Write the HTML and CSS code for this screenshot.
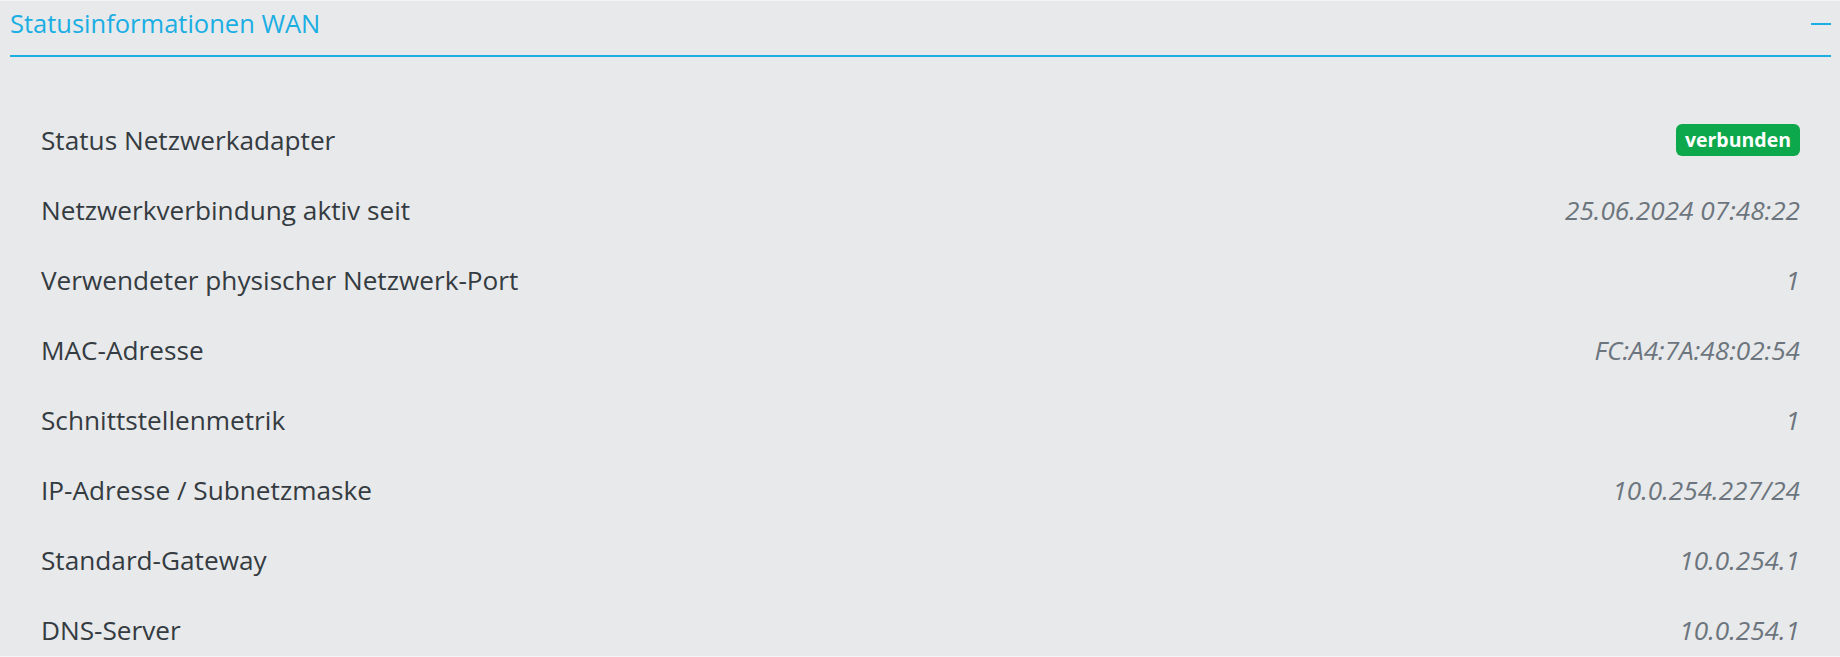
FILE: index.html
```html
<!DOCTYPE html>
<html lang="de">
<head>
  <meta charset="UTF-8" />
  <meta name="viewport" content="width=device-width, initial-scale=1.0" />
  <title>Statusinformationen WAN</title>
  <link rel="stylesheet" href="styles.css">
</head>
<body>
  <section class="panel">
    <header class="panel-head">
      <h2>Statusinformationen WAN</h2>
      <button class="collapse" title="Einklappen"><span></span></button>
    </header>

    <div class="panel-body">
      <div class="row">
        <span class="label">Status Netzwerkadapter</span>
        <span class="badge">verbunden</span>
      </div>
      <div class="row">
        <span class="label">Netzwerkverbindung aktiv seit</span>
        <span class="value">25.06.2024 07:48:22</span>
      </div>
      <div class="row">
        <span class="label">Verwendeter physischer Netzwerk-Port</span>
        <span class="value">1</span>
      </div>
      <div class="row">
        <span class="label">MAC-Adresse</span>
        <span class="value">FC:A4:7A:48:02:54</span>
      </div>
      <div class="row">
        <span class="label">Schnittstellenmetrik</span>
        <span class="value">1</span>
      </div>
      <div class="row">
        <span class="label">IP-Adresse / Subnetzmaske</span>
        <span class="value">10.0.254.227/24</span>
      </div>
      <div class="row">
        <span class="label">Standard-Gateway</span>
        <span class="value">10.0.254.1</span>
      </div>
      <div class="row">
        <span class="label">DNS-Server</span>
        <span class="value">10.0.254.1</span>
      </div>
    </div>
  </section>
</body>
</html>
```

FILE: styles.css
```css
:root {
  --bg: #e8e9eb;
  --edge: #f4f5f6;
  --blue: #1aaee3;
  --text: #343b41;
  --muted: #6c757d;
  --green: #0ca84b;
}

* {
  margin: 0;
  padding: 0;
  box-sizing: border-box;
}

html, body {
  height: 100%;
  overflow: hidden;
}

body {
  font-family: 'Open Sans', 'Noto Sans', sans-serif;
  font-size: 26.2px;
  background-color: var(--bg);
  color: var(--text);
}

.panel {
  height: 100vh;
  padding: 0 9px 0 10px;
  border-top: 1px solid var(--edge);
  border-bottom: 1px solid var(--edge);
  overflow: hidden;
}

.panel-head {
  display: flex;
  justify-content: space-between;
  align-items: center;
  padding: 5px 0 14px 0;
  border-bottom: 2px solid var(--blue);
}

.panel-head h2 {
  font-size: 25.5px;
  font-weight: 400;
  line-height: 35px;
  color: var(--blue);
}

.collapse {
  background: none;
  border: none;
  width: 20px;
  height: 20px;
  display: flex;
  align-items: center;
  cursor: pointer;
}

.collapse span {
  display: block;
  width: 20px;
  height: 2px;
  background-color: var(--blue);
}

.panel-body {
  padding: 48px 31px 0 31px;
}

.row {
  display: flex;
  justify-content: space-between;
  align-items: center;
  height: 70px;
  line-height: 35px;
}

.value {
  font-style: italic;
  color: var(--muted);
}

.badge {
  background-color: var(--green);
  color: #fff;
  font-size: 19.5px;
  font-weight: 700;
  line-height: 32px;
  height: 32px;
  padding: 0 9px;
  border-radius: 6px;
}
```
